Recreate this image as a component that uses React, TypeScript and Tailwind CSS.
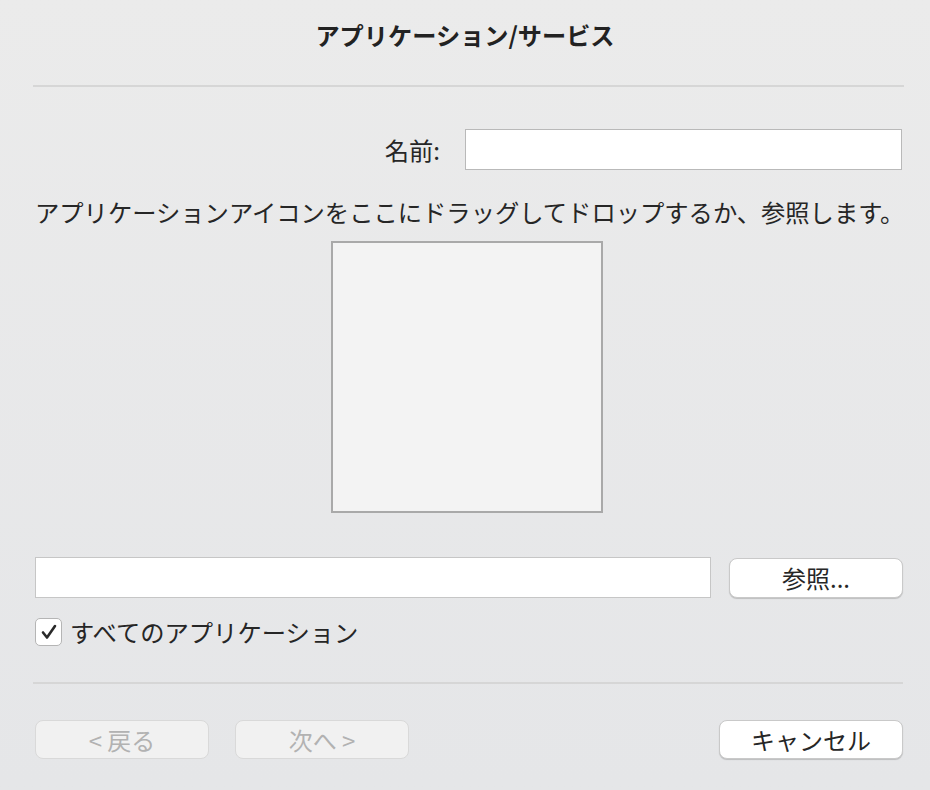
import React from 'react';

const font = { fontFamily: '"Noto Sans CJK JP", "Noto Sans", sans-serif' };

const PushButton = ({
  label,
  disabled,
  className,
}: {
  label: string;
  disabled?: boolean;
  className: string;
}) => (
  <button
    disabled={disabled}
    className={`h-[39px] rounded-[8px] border text-[24px] leading-none flex items-center justify-center ${
      disabled
        ? 'bg-[#f1f1f1] border-[#d9d9d9] text-[#b2b2b2]'
        : 'bg-white border-[#c9c9c9] text-[#262626] shadow-[0_1px_1px_rgba(0,0,0,0.18)]'
    } ${className}`}
  >
    {label}
  </button>
);

export default function App() {
  return (
    <div
      className="w-[930px] h-[790px] bg-gradient-to-b from-[#ebebeb] to-[#e5e6e8] text-[#262626] flex flex-col"
      style={font}
    >
      <div className="h-[85px] pt-[20px]">
        <h1 className="text-center text-[24.2px] leading-[30px] font-bold text-[#222]">
          アプリケーション/サービス
        </h1>
      </div>
      <div className="ml-[33px] mr-[26px] h-[2px] bg-[#d6d6d6]" />

      <div className="mt-[42px] flex items-center justify-end pr-[28px]">
        <span className="text-[24.3px] leading-[30px] mr-[25px]">名前:</span>
        <input className="w-[437px] h-[41px] bg-white border border-[#b9b9b9] outline-none px-2" />
      </div>

      <p className="mt-[27px] pl-[35px] text-[24.3px] leading-[30px] whitespace-nowrap">
        アプリケーションアイコンをここにドラッグしてドロップするか、参照します。
      </p>

      <div className="mt-[14px] ml-[331px] w-[272px] h-[272px] bg-[#f3f3f3] border-2 border-[#a9a9a9]" />

      <div className="mt-[44px] flex items-center pl-[35px]">
        <input className="w-[676px] h-[41px] bg-white border border-[#c6c6c6] outline-none px-2" />
        <PushButton label="参照..." className="ml-[18px] w-[174px] h-[40px]" />
      </div>

      <label className="mt-[19px] ml-[35px] flex items-center">
        <span className="w-[27px] h-[28px] bg-white border border-[#b5b5b5] rounded-[5px] flex items-center justify-center">
          <svg width="18" height="18" viewBox="0 0 18 18" fill="none">
            <path
              d="M3 9.5 L7 14.5 L15 3"
              stroke="#2a2a2a"
              strokeWidth="2.6"
              strokeLinecap="round"
              strokeLinejoin="round"
            />
          </svg>
        </span>
        <span className="ml-[8px] text-[24.3px] leading-[30px]">すべてのアプリケーション</span>
      </label>

      <div className="mt-[35px] ml-[33px] mr-[27px] h-[2px] bg-[#d6d6d6]" />

      <div className="mt-[36px] flex items-center pr-[27px] pl-[35px]">
        <PushButton label="< 戻る" disabled className="w-[174px]" />
        <PushButton label="次へ >" disabled className="ml-[26px] w-[174px]" />
        <PushButton label="キャンセル" className="ml-auto w-[184px]" />
      </div>
    </div>
  );
}
